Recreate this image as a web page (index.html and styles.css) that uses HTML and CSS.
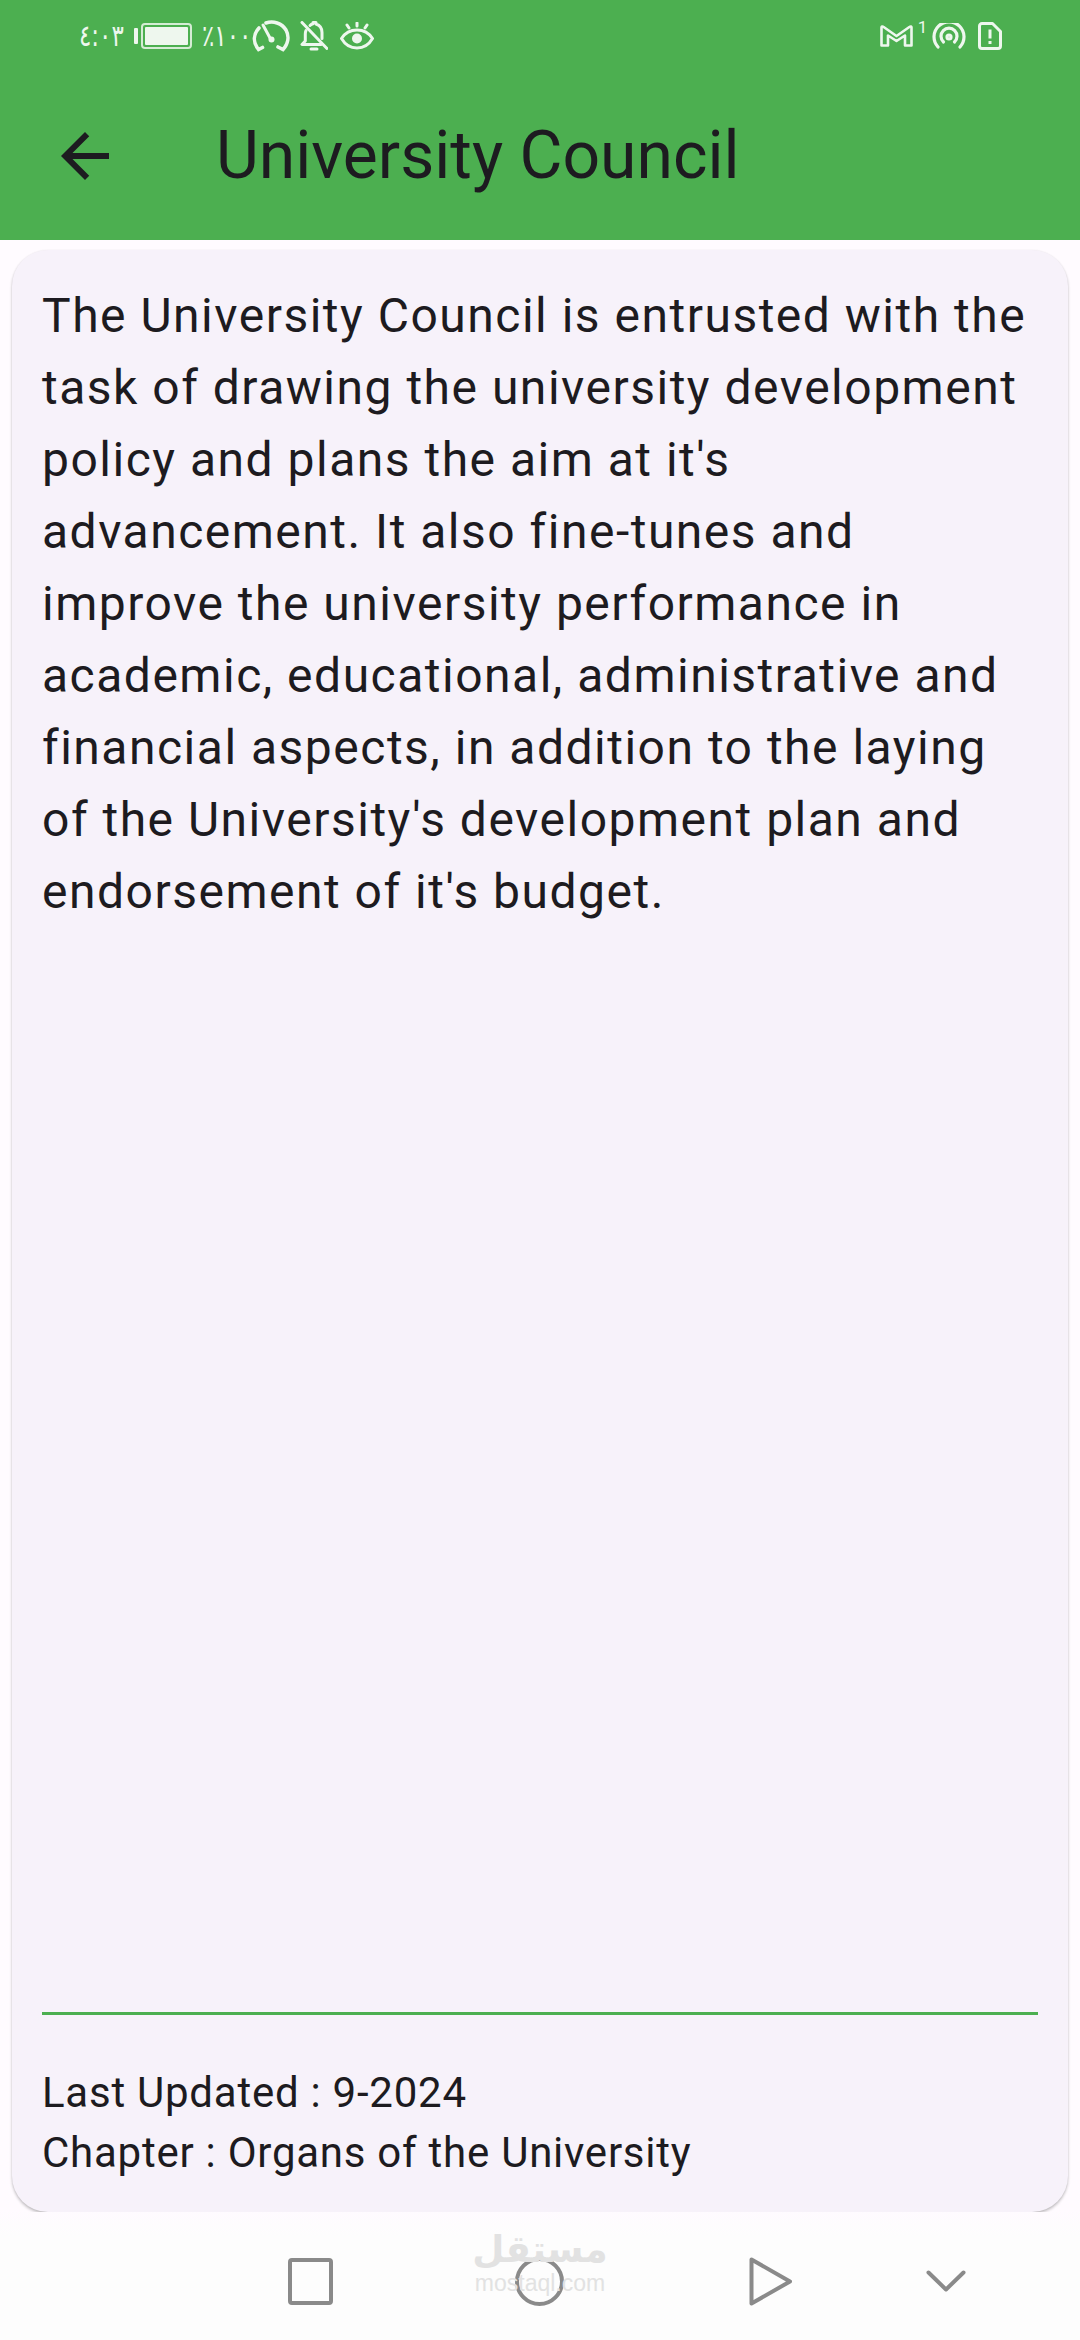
FILE: index.html
```html
<!DOCTYPE html>
<html lang="en">

<head>
  <meta charset="UTF-8" />
  <title>University Council</title>
  <link rel="stylesheet" href="styles.css">
</head>

<body>
  <div class="screen">
    <header class="header">
      <div class="statusbar">
        <div class="status-left">
          <span class="status-text time">٤:٠٣</span>
          <span class="battery-nub"></span>
          <span class="battery"><span class="battery-fill"></span></span>
          <span class="status-text percent">٪١٠٠</span>
          <svg class="ic-gauge" viewBox="0 0 38 32" fill="none" stroke="#eef7ee" stroke-width="3.6" stroke-linecap="round">
            <path d="M14 3C21 .5 30 3 34 10c3.500 6.500 2 14-3 19.500l-5-2.500" />
            <path d="M7 8C1.500 14 .5 22 6.500 29.500l4-2" />
            <path d="M11 5l7 13" stroke-width="3" />
            <circle cx="19.500" cy="19.500" r="3" fill="#eef7ee" stroke="none" />
          </svg>
          <svg class="ic-bell" viewBox="0 0 28 30" fill="none" stroke="#eef7ee" stroke-width="3" stroke-linecap="round" stroke-linejoin="round">
            <path d="M2 1.500l25 26" />
            <path d="M10 4.500c1-1 2-1.500 3-1.800V1.500h3v1.500c4 1.300 6 4.500 6 8.500v6" />
            <path d="M6 9.500c-.5 1-.7 2-.7 3.500v7L2 23.500h19" />
            <path d="M11 28h6" />
          </svg>
          <svg class="ic-eye" viewBox="0 0 34 28" fill="none" stroke="#eef7ee" stroke-width="3" stroke-linecap="round" stroke-linejoin="round">
            <path d="M1.500 16.500C5 11 10.500 8 17 8s12 3 15.500 8.500C29 22.500 23.500 26 17 26S5 22.500 1.500 16.500z" />
            <circle cx="17" cy="16.500" r="5" fill="#eef7ee" stroke="none" />
            <path d="M17 1v3M7 3l2 3M27 3l-2 3" />
          </svg>
        </div>
        <div class="status-right">
          <svg class="ic-mail" viewBox="0 0 33 22" fill="none" stroke="#eef7ee" stroke-width="2.600" stroke-linejoin="round">
            <path d="M1.500 20.500V2.500c0-1 1-1.300 1.800-.7L16.500 11 29.700 1.800c.8-.6 1.800-.3 1.800.7v18h-6.500V10.500L16.500 16 8 10.500v10z" />
          </svg>
          <span class="mail-count">1</span>
          <svg class="ic-hotspot" viewBox="0 0 34 26" fill="none" stroke="#eef7ee" stroke-width="3.200" stroke-linecap="round">
            <path d="M6 24A15 15 0 1 1 28 24" />
            <path d="M11.500 19A8 8 0 1 1 22.500 19" />
            <circle cx="17" cy="14" r="2" />
          </svg>
          <svg class="ic-sim" viewBox="0 0 24 28" fill="none" stroke="#eef7ee" stroke-width="3" stroke-linejoin="round">
            <path d="M4 1.500h10.500l8 8V24a2.500 2.500 0 0 1-2.500 2.500H4A2.500 2.500 0 0 1 1.500 24V4A2.500 2.500 0 0 1 4 1.500z" />
            <path d="M12 7.500v9M12 19v3" />
          </svg>
        </div>
      </div>
      <div class="appbar">
        <svg class="back" viewBox="0 0 24 24" fill="#1d1b20">
          <path d="M20 11H7.830l5.590-5.590L12 4l-8 8 8 8 1.410-1.410L7.830 13H20v-2z" />
        </svg>
        <h1 class="title">University Council</h1>
      </div>
    </header>

    <main class="card">
      <p class="desc">The University Council is entrusted with the task of drawing the university development policy and plans the aim at it's advancement. It also fine-tunes and improve the university performance in academic, educational, administrative and financial aspects, in addition to the laying of the University's development plan and endorsement of it's budget.</p>
      <div class="meta">
        <div>Last Updated : 9-2024</div>
        <div>Chapter : Organs of the University</div>
      </div>
    </main>

    <nav class="navbar">
      <svg class="nav-square" viewBox="0 0 45 47" fill="none" stroke="#8a8a8a" stroke-width="4">
        <rect x="2" y="2" width="41" height="43" rx="2" />
      </svg>
      <svg class="nav-circle" viewBox="0 0 49 49" fill="none" stroke="#8a8a8a" stroke-width="4">
        <circle cx="24.500" cy="24.500" r="22.500" />
      </svg>
      <svg class="nav-play" viewBox="0 0 43 49" fill="none" stroke="#8a8a8a" stroke-width="4" stroke-linejoin="round">
        <path d="M2.500 2.500L41 24.500 2.500 46.500z" />
      </svg>
      <svg class="nav-down" viewBox="0 0 40 22" fill="none" stroke="#8a8a8a" stroke-width="4" stroke-linecap="round" stroke-linejoin="round">
        <path d="M2.500 2.500L20 19.500 37.500 2.500" />
      </svg>
      <div class="watermark">
        <div class="wm-ar" lang="ar" dir="rtl">مستقل</div>
        <div class="wm-en">mostaql.com</div>
      </div>
    </nav>
  </div>
</body>

</html>
```

FILE: styles.css
```css
html,
body {
  margin: 0;
  padding: 0;
}

body {
  font-family: 'Roboto', sans-serif;
  background: #fffbff;
  color: #1d1b20;
}

.screen {
  width: 1080px;
  height: 2340px;
  display: flex;
  flex-direction: column;
  overflow: hidden;
}

.header {
  background: #4caf50;
  height: 240px;
  flex: none;
}

.statusbar {
  height: 72px;
  display: flex;
  justify-content: space-between;
  align-items: center;
  padding: 0 78px 0 79px;
  box-sizing: border-box;
}

.status-left,
.status-right {
  display: flex;
  align-items: center;
}

.status-text {
  color: #eef7ee;
  font-family: 'DejaVu Sans', sans-serif;
  font-size: 23px;
  line-height: 30px;
  transform: scale(1, 1.3);
  direction: ltr;
  unicode-bidi: bidi-override;
}

.time {
  width: 46px;
  margin-right: 9px;
  white-space: nowrap;
}

.battery-nub {
  width: 4px;
  height: 16px;
  background: #eef7ee;
  border-radius: 1px;
  margin-right: 3px;
}

.battery {
  width: 51px;
  height: 26px;
  box-sizing: border-box;
  border: 2px solid #d5ecd5;
  border-radius: 4px;
  padding: 2px;
  display: flex;
  margin-right: 10px;
}

.battery-fill {
  flex: 1;
  background: #eef7ee;
  border-radius: 1px;
}

.percent {
  width: 43px;
  margin-right: 7px;
  white-space: nowrap;
}

.ic-gauge {
  width: 38px;
  height: 32px;
  margin-right: 10px;
}

.ic-bell {
  width: 28px;
  height: 30px;
  margin-right: 12px;
}

.ic-eye {
  width: 34px;
  height: 28px;
}

.ic-mail {
  width: 33px;
  height: 22px;
}

.mail-count {
  color: #eef7ee;
  font-size: 17px;
  line-height: 15px;
  width: 19px;
  text-align: center;
  align-self: flex-start;
  margin-top: -2px;
}

.ic-hotspot {
  width: 34px;
  height: 26px;
  margin-right: 12px;
}

.ic-sim {
  width: 24px;
  height: 28px;
}

.appbar {
  height: 168px;
  display: flex;
  align-items: center;
  padding-left: 49px;
}

.back {
  width: 72px;
  height: 72px;
  flex: none;
  margin-right: 95px;
}

.title {
  margin: 0;
  font-size: 66px;
  font-weight: 400;
  line-height: 88px;
}

.card {
  flex: 1;
  margin: 10px 12px 0;
  padding: 30px 30px 29px;
  background: #f7f2fa;
  border-radius: 36px;
  box-shadow: 0 2px 3px rgba(0, 0, 0, 0.24), 0 0 2px rgba(0, 0, 0, 0.06);
  display: flex;
  flex-direction: column;
}

.desc {
  margin: 0;
  flex: 1;
  font-size: 48px;
  line-height: 72px;
  letter-spacing: 1.5px;
}

.meta {
  border-top: 3px solid #4caf50;
  padding-top: 48px;
  font-size: 42px;
  line-height: 60px;
  letter-spacing: 0.75px;
}

.navbar {
  position: relative;
  flex: none;
  height: 128px;
  box-sizing: border-box;
  display: flex;
  align-items: center;
  background: linear-gradient(#fffbff, #fdfdfd 24px);
  padding: 10px 0 0 288px;
}

.nav-square {
  width: 45px;
  height: 47px;
  margin-right: 182px;
}

.nav-circle {
  width: 49px;
  height: 49px;
  margin-right: 185px;
}

.nav-play {
  width: 43px;
  height: 49px;
  margin-right: 134px;
}

.nav-down {
  width: 40px;
  height: 22px;
}

.watermark {
  position: absolute;
  left: 470px;
  top: 16px;
  width: 140px;
  text-align: center;
  color: #e2e2e2;
}

.wm-ar {
  font-family: 'DejaVu Sans', sans-serif;
  font-weight: 700;
  font-size: 37px;
  line-height: 44px;
}

.wm-en {
  font-family: 'Liberation Sans', sans-serif;
  font-size: 23px;
  line-height: 22px;
}
```
